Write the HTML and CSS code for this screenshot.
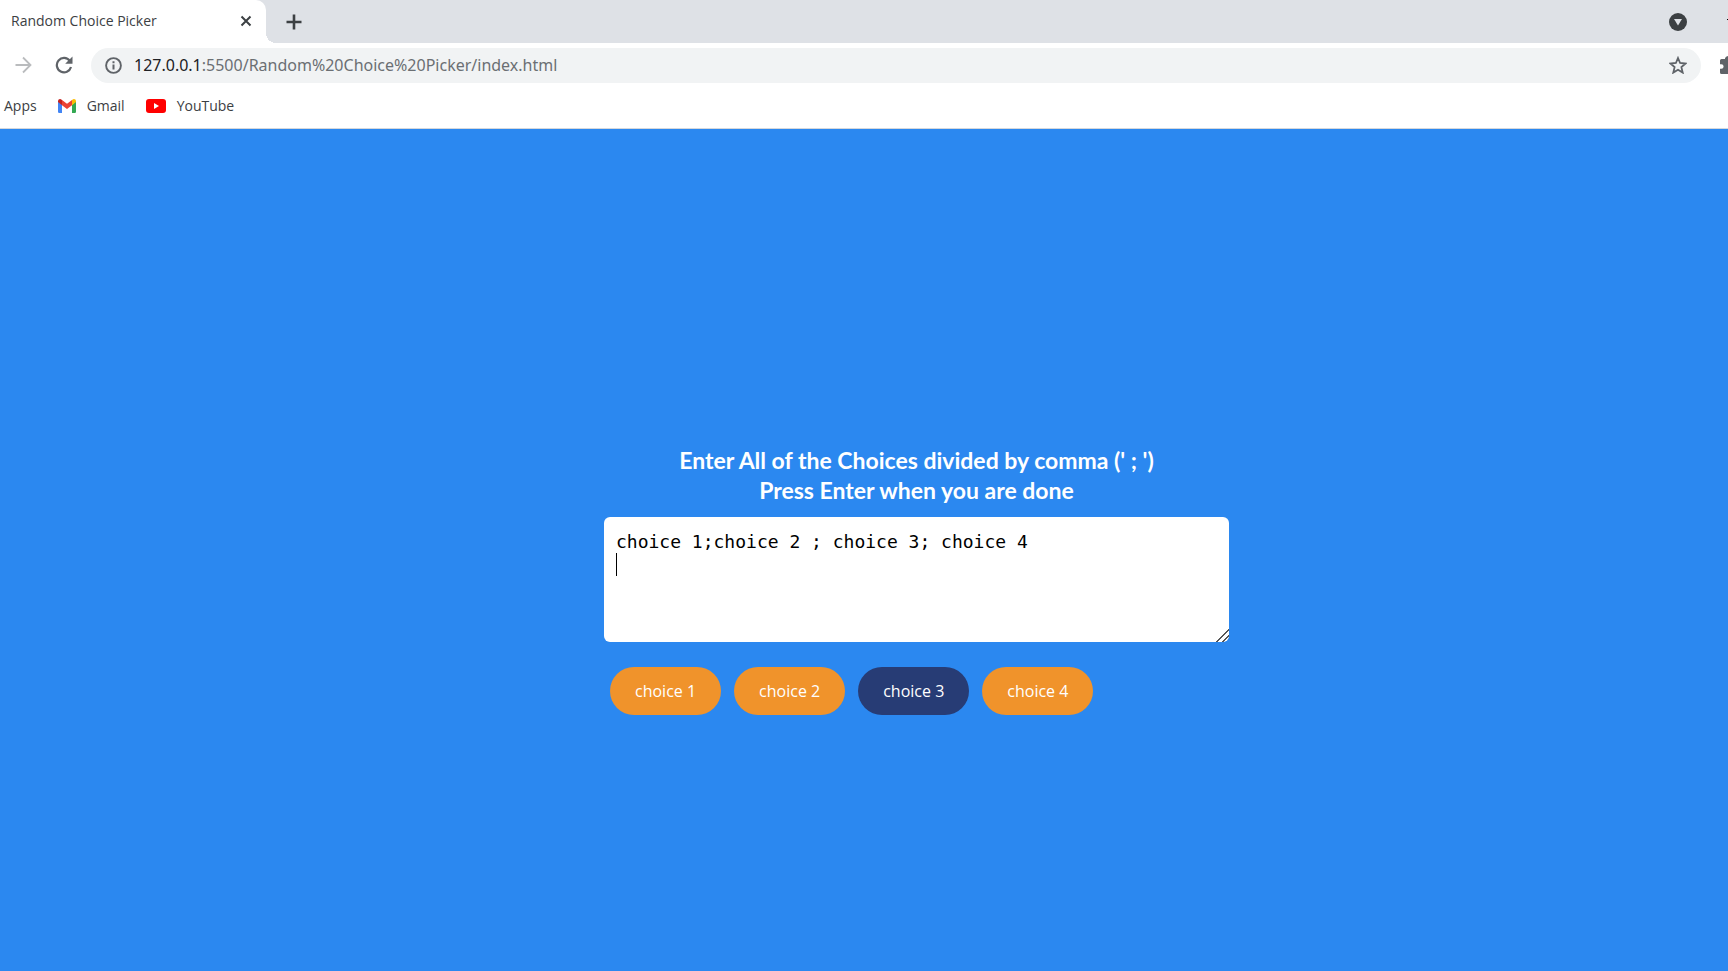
FILE: index.html
```html
<!DOCTYPE html>
<html lang="en">
<head>
<meta charset="utf-8">
<title>Random Choice Picker</title>
<link rel="stylesheet" href="styles.css">
</head>
<body>
<header class="browser">
  <div class="tabstrip">
    <div class="tab">
      <span class="tab-title">Random Choice Picker</span>
      <button class="icon-button" type="button" aria-label="Close tab">
        <svg width="12" height="12" viewBox="0 0 12 12" fill="none" stroke="#3c4043" stroke-width="2"><path d="M1.500 1.500l9 9M10.500 1.500l-9 9"/></svg>
      </button>
    </div>
    <button class="icon-button new-tab" type="button" aria-label="New tab">
      <svg width="16" height="16" viewBox="0 0 16 16" fill="none" stroke="#3c4043" stroke-width="2.600"><path d="M8 .5v15M.5 8h15"/></svg>
    </button>
    <button class="icon-button tab-search" type="button" aria-label="Search tabs">
      <svg width="18" height="18" viewBox="0 0 18 18"><circle cx="9" cy="9" r="9" fill="#3c4043"/><path d="M5 6h8l-4 6.500z" fill="#dee1e6"/></svg>
    </button>
    <button class="icon-button minimize" type="button" aria-label="Minimize">
      <svg width="1" height="12" viewBox="0 0 1 12"><path d="M0 3h1v1H0z" fill="#000"/></svg>
    </button>
  </div>
  <div class="toolbar">
    <button class="icon-button forward" type="button" aria-label="Forward" disabled>
      <svg width="18" height="18" viewBox="0 0 18 18" fill="none" stroke="#babcbe" stroke-width="1.800"><path d="M.5 9h15M8 1.500l7.500 7.500L8 16.500"/></svg>
    </button>
    <button class="icon-button reload" type="button" aria-label="Reload">
      <svg width="18" height="18" viewBox="0 0 18 18"><path d="M14.800 4.800A7.200 7.200 0 1 0 16 11" fill="none" stroke="#5f6368" stroke-width="2.200"/><path d="M17.500.5v7.300h-7.300z" fill="#5f6368"/></svg>
    </button>
    <div class="omnibox">
      <svg width="17" height="17" viewBox="0 0 17 17"><circle cx="8.500" cy="8.500" r="7.400" fill="none" stroke="#5f6368" stroke-width="1.900"/><path d="M7.500 7.500h2v5h-2zM7.500 4.200h2v2h-2z" fill="#5f6368"/></svg>
      <div class="address"><span class="host">127.0.0.1</span>:5500/Random%20Choice%20Picker/index.html</div>
      <button class="icon-button star" type="button" aria-label="Bookmark this page">
        <svg width="18" height="18" viewBox="0 0 18 18" fill="none" stroke="#5f6368" stroke-width="1.800"><path d="M9 2l2.100 5 5.500.5-4.200 3.600 1.300 5.500L9 13.700l-4.700 2.900 1.300-5.500L1.400 7.500l5.500-.5z"/></svg>
      </button>
    </div>
    <button class="icon-button extensions" type="button" aria-label="Extensions">
      <svg width="8" height="18" viewBox="0 0 8 18"><path d="M8 0v18H1.500Q0 18 0 16.500V12.800h1.300a2.300 2.300 0 0 0 0-4.600H0V4.500Q0 3 1.500 3H5V2.200Q5.500.5 8 0z" fill="#5f6368"/></svg>
    </button>
  </div>
  <nav class="bookmarks" aria-label="Bookmarks">
    <a class="bookmark" href="#">Apps</a>
    <a class="bookmark" href="#">
      <svg width="18" height="14" viewBox="0 0 18 14"><path d="M0 2.500l4 3V14H1.200Q0 14 0 12.800z" fill="#4285f4"/><path d="M18 2.500l-4 3V14h2.800q1.200 0 1.200-1.200z" fill="#34a853"/><path d="M4 1l5 3.800L14 1v5.200L9 10 4 6.200z" fill="#ea4335"/><path d="M0 3V2Q.2 0 2 0q.8 0 2 1v5.200z" fill="#c5221f"/><path d="M18 3V2q-.2-2-2-2-.8 0-2 1v5.200z" fill="#fbbc04"/></svg>
      Gmail
    </a>
    <a class="bookmark" href="#">
      <svg width="20" height="14" viewBox="0 0 20 14"><rect width="20" height="14" rx="3" fill="#f00"/><path d="M8 4l5 3-5 3z" fill="#fff"/></svg>
      YouTube
    </a>
  </nav>
</header>
<main class="page">
  <div class="container">
    <h1 class="heading"><label for="choices">Enter All of the Choices divided by comma (' ; ')<br>Press Enter when you are done</label></h1>
    <div class="field">
      <textarea class="choices" id="choices" spellcheck="false">choice 1;choice 2 ; choice 3; choice 4
</textarea>
      <span class="caret"></span>
    </div>
    <div class="tags">
      <span class="tag">choice 1</span>
      <span class="tag">choice 2</span>
      <span class="tag highlight">choice 3</span>
      <span class="tag">choice 4</span>
    </div>
  </div>
</main>
</body>
</html>
```
FILE: styles.css
```css
* { box-sizing: border-box; }

body {
  margin: 0;
  min-height: 100vh;
  display: flex;
  flex-direction: column;
  overflow: hidden;
  background: #2b88f0;
  font-family: "Open Sans", "Noto Sans", sans-serif;
}

svg { display: block; flex: none; }

.icon-button {
  padding: 0;
  border: 0;
  background: none;
  flex: none;
}

.browser {
  background: #fff;
  border-bottom: 1px solid #d4d7dc;
}

.tabstrip {
  height: 43px;
  display: flex;
  align-items: center;
  background: #dee1e6;
}

.tab {
  position: relative;
  width: 266px;
  height: 43px;
  padding: 0 14px 2px 11px;
  display: flex;
  align-items: center;
  justify-content: space-between;
  background: #fff;
  border-radius: 0 10px 0 0;
  color: #3c4043;
  font-size: 14px;
}

.tab::after {
  content: "";
  position: absolute;
  left: 100%;
  bottom: 0;
  width: 10px;
  height: 10px;
  background: radial-gradient(circle at 100% 0, #dee1e6 10px, #fff 10px);
}

.new-tab { margin-left: 20px; }
.tab-search { margin-left: auto; }
.minimize { margin-left: 40px; }

.toolbar {
  height: 44px;
  display: flex;
  align-items: center;
}

.forward { margin-left: 15px; }
.reload { margin-left: 22px; }

.omnibox {
  flex: 1;
  height: 35px;
  margin-left: 18px;
  padding: 0 14px;
  display: flex;
  align-items: center;
  gap: 12px;
  background: #f1f3f4;
  border-radius: 18px;
  color: #6b6f73;
  font-family: "Noto Sans", sans-serif;
  font-size: 16px;
}

.host { color: #202124; }
.star { margin-left: auto; }
.extensions { margin-left: 19px; }

.bookmarks {
  height: 41px;
  padding: 0 4px 4px;
  display: flex;
  align-items: center;
  gap: 21px;
}

.bookmark {
  display: flex;
  align-items: center;
  gap: 11px;
  color: #3c4043;
  font-size: 14px;
  text-decoration: none;
}

.page {
  flex: 1;
  display: flex;
  align-items: center;
  justify-content: center;
  padding: 60px 0 0 105px;
}

.container {
  width: 625px;
  max-width: 100%;
}

.heading {
  margin: 0 0 12px;
  color: #fff;
  font-family: "Lato", sans-serif;
  font-size: 23px;
  line-height: 30px;
  text-align: center;
}

.field {
  position: relative;
  margin-bottom: 25px;
}

.choices {
  display: block;
  width: 100%;
  height: 125px;
  padding: 13px 12px 12px;
  border: 0;
  border-radius: 6px;
  outline: 0;
  background: #fff;
  color: #000;
  font-family: "DejaVu Sans Mono", monospace;
  font-size: 18px;
  line-height: 24px;
}

.choices::-webkit-resizer {
  background: linear-gradient(135deg, transparent 12px, #555 12px, #555 13px, transparent 13px, transparent 16px, #555 16px, #555 17px, transparent 17px);
}

.caret {
  position: absolute;
  left: 12px;
  top: 36px;
  width: 1px;
  height: 23px;
  background: #000;
}

.tags {
  display: flex;
  flex-wrap: wrap;
  gap: 13px;
  padding: 0 6px;
}

.tag {
  padding: 12px 25px;
  border-radius: 24px;
  background: #f0932b;
  color: #fff;
  font-size: 16px;
  line-height: 24px;
}

.highlight { background: #273c75; }
```
